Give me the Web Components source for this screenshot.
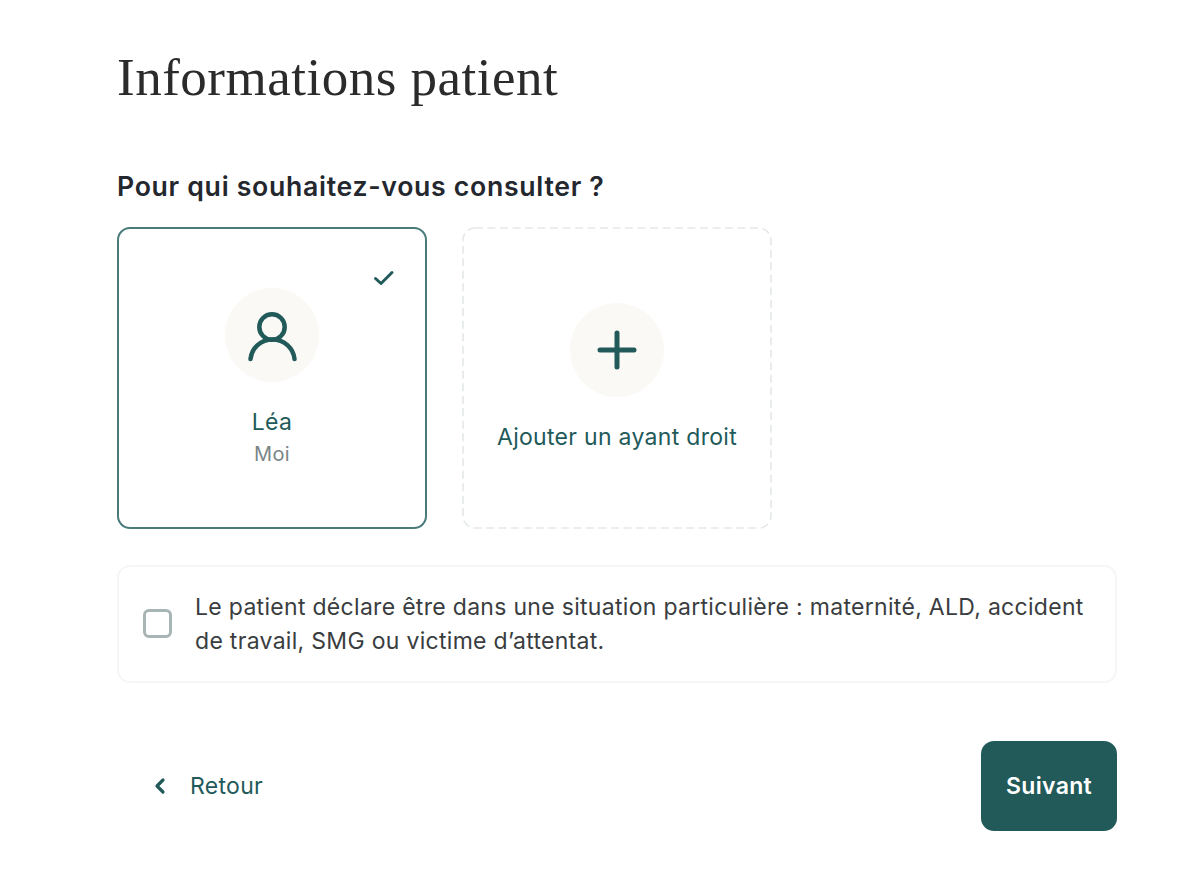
<!DOCTYPE html>
<html lang="fr"><head><meta charset="utf-8"><style>
html,body{margin:0;background:#fff}
body{font-family:Inter,"Liberation Sans",sans-serif;height:874px;overflow:hidden}
</style></head><body>
<patient-form></patient-form>
<script>
const TEAL='#225a5a';
class ChoiceCard extends HTMLElement{
 constructor(){super();const selected=this.hasAttribute('selected');
 this.attachShadow({mode:'open'}).innerHTML=`<style>
 :host{display:flex;flex-direction:column;align-items:center;justify-content:center;position:relative;box-sizing:border-box;width:310px;height:302px;border-radius:13px;
 ${selected?'border:2px solid #4a7b7b;padding-top:1px;':''}color:${TEAL};text-align:center;font-size:23px;letter-spacing:.3px}
 .c{width:94px;height:94px;border-radius:50%;background:#faf9f5;display:flex;align-items:center;justify-content:center}
 .check{position:absolute;top:37px;right:29px;display:block}
 .dash{position:absolute;inset:0;width:100%;height:100%;display:block}
 ::slotted([slot=name]){margin-top:23px;line-height:34px}
 </style>
 ${selected?`<svg class="check" width="24" height="24" viewBox="0 0 24 24" fill="none" stroke="${TEAL}" stroke-width="3" stroke-linecap="round" stroke-linejoin="round"><path d="M3.500 12.500 9 17.500 20 6.500"/></svg>`:`<svg class="dash" viewBox="0 0 310 302" fill="none"><rect x="1" y="1" width="308" height="300" rx="12" stroke="#e6e9e9" stroke-width="1.700" stroke-dasharray="8 4.500"/></svg>`}
 <div class="c"><slot name="icon"></slot></div><slot name="name"></slot><slot name="sub"></slot>`;}
}
customElements.define('choice-card',ChoiceCard);
class SituationBox extends HTMLElement{
 constructor(){super();this.attachShadow({mode:'open'}).innerHTML=`<style>
 :host{display:flex;align-items:center;gap:23px;box-sizing:border-box;width:1000px;height:118px;padding:0 24px;border:2px solid #f5f6f6;border-radius:13px;font-size:23px;line-height:34px;color:#3a3d40;letter-spacing:.3px}
 .b{flex:none;box-sizing:border-box;width:29px;height:29px;margin-bottom:2px;border:3px solid #a9b5b5;border-radius:6px}
 </style><span class="b"></span><div><slot></slot></div>`;}
}
customElements.define('situation-box',SituationBox);
class BackLink extends HTMLElement{
 constructor(){super();this.attachShadow({mode:'open'}).innerHTML=`<style>
 :host{display:flex;align-items:center;gap:19px;padding-left:30px;color:${TEAL};font-size:23px;letter-spacing:.3px;font-weight:400}
 svg{display:block}
 </style><svg width="24" height="24" viewBox="0 0 24 24" fill="none" stroke="${TEAL}" stroke-width="3.200" stroke-linecap="round" stroke-linejoin="round"><path d="M16 6 10 12 16 18"/></svg><slot></slot>`;}
}
customElements.define('back-link',BackLink);
class PrimaryButton extends HTMLElement{
 constructor(){super();this.attachShadow({mode:'open'}).innerHTML=`<style>
 :host{display:flex;align-items:center;justify-content:center;width:136px;height:90px;background:${TEAL};color:#fff;border-radius:13px;font-size:23px;letter-spacing:.3px;font-weight:600}
 </style><slot></slot>`;}
}
customElements.define('primary-button',PrimaryButton);
class PatientForm extends HTMLElement{
 constructor(){super();this.attachShadow({mode:'open'}).innerHTML=`<style>
 :host{display:block;box-sizing:border-box;width:1000px;margin-left:117px;padding-top:44px}
 h1{margin:0;font:400 53px/66px "Liberation Serif",serif;color:#2b2b2b;letter-spacing:.5px}
 h2{margin:59px 0 0;font-size:26.670px;line-height:34px;font-weight:600;color:#24282e;letter-spacing:.69px}
 .cards{display:flex;gap:35px;margin-top:24px}
 .box{margin-top:36px}
 .foot{display:flex;justify-content:space-between;align-items:center;margin-top:58px}
 .n{display:block}.s{display:block;color:#7a8587;font-size:20px;line-height:30px}
 </style>
 <h1>Informations patient</h1>
 <h2>Pour qui souhaitez-vous consulter ?</h2>
 <div class="cards">
  <choice-card selected>
   <svg slot="icon" width="56" height="56" viewBox="0 0 56 56" fill="none" stroke="${TEAL}" stroke-width="4.500" stroke-linecap="round"><circle cx="28" cy="20" r="12.700"/><path d="M6.500 52C7.500 41 17 32.500 28.500 32.500S49.500 41 50.500 52"/></svg>
   <span class="n" slot="name">Léa</span><span class="s" slot="sub">Moi</span>
  </choice-card>
  <choice-card>
   <svg slot="icon" width="40" height="40" viewBox="0 0 40 40" fill="none" stroke="${TEAL}" stroke-width="5" stroke-linecap="round"><path d="M20 3V37M3 20H37"/></svg>
   <span class="n" slot="name">Ajouter un ayant droit</span>
  </choice-card>
 </div>
 <situation-box class="box">Le patient déclare être dans une situation particulière : maternité, ALD, accident de travail, SMG ou victime d’attentat.</situation-box>
 <div class="foot"><back-link>Retour</back-link><primary-button>Suivant</primary-button></div>`;}
}
customElements.define('patient-form',PatientForm);
</script></body></html>
